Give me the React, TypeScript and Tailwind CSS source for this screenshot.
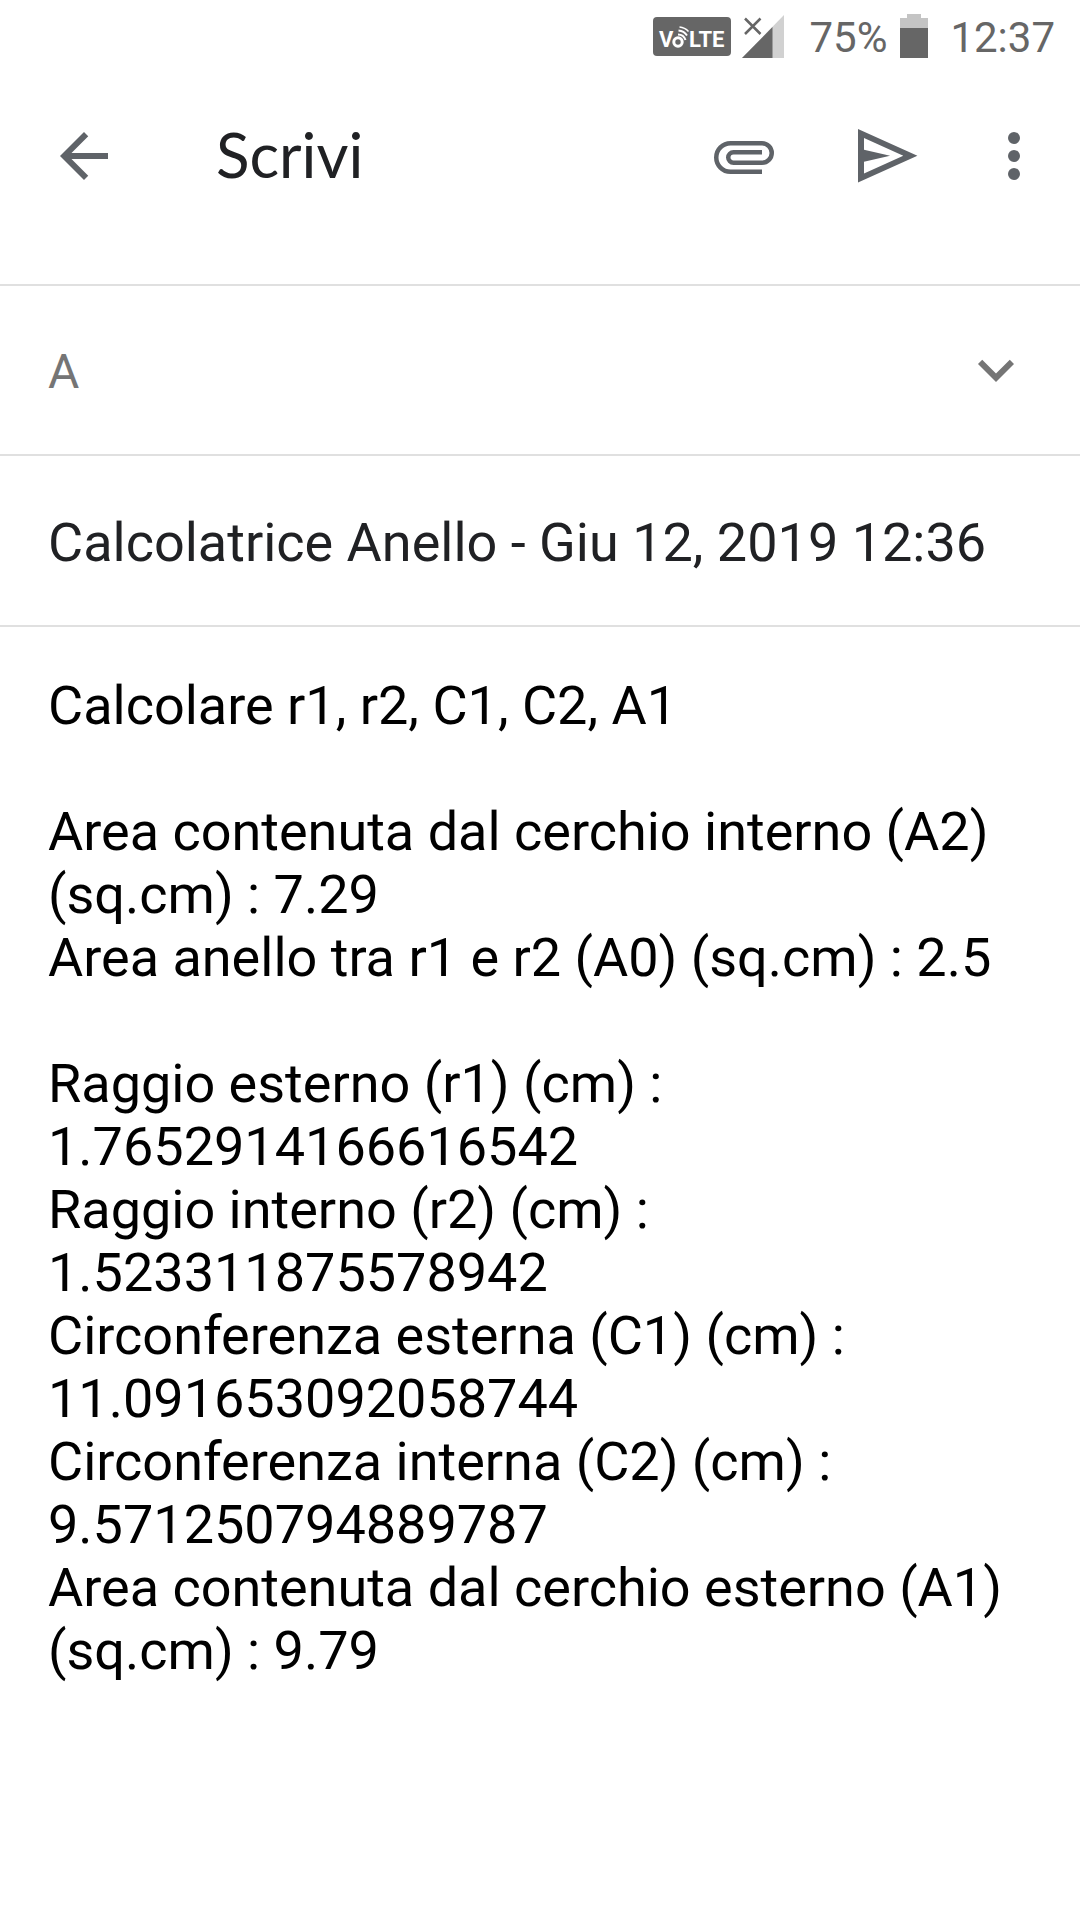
import { useState } from "react";

const DRAFT_SUBJECT = "Calcolatrice Anello - Giu 12, 2019 12:36";

const DRAFT_BODY = `Calcolare r1, r2, C1, C2, A1

Area contenuta dal cerchio interno (A2) (sq.cm) : 7.29
Area anello tra r1 e r2 (A0) (sq.cm) : 2.5

Raggio esterno (r1) (cm) : 1.7652914166616542
Raggio interno (r2) (cm) : 1.523311875578942
Circonferenza esterna (C1) (cm) : 11.091653092058744
Circonferenza interna (C2) (cm) : 9.571250794889787
Area contenuta dal cerchio esterno (A1) (sq.cm) : 9.79`;

function VolteBadge() {
  return (
    <svg viewBox="0 0 78 39" className="w-[78px] h-[39px]" aria-label="VoLTE">
      <rect width="78" height="39" rx="4" fill="#666666" />
      <g fill="#ffffff" className="font-['Roboto',sans-serif] font-bold text-[22px]">
        <text x="6" y="30">V</text>
        <text x="36" y="30">LTE</text>
      </g>
      <g fill="none" stroke="#ffffff">
        <circle cx="25" cy="25" r="4.2" strokeWidth="3" />
        <path d="M25 17.5a8 8 0 0 1 7.5 5.5" strokeWidth="2" />
        <path d="M25.5 13.5a11.5 11.5 0 0 1 8.5 5" strokeWidth="2" />
        <path d="M26.5 10a14 14 0 0 1 9 4.5" strokeWidth="1.5" />
      </g>
    </svg>
  );
}

function SignalIcon() {
  return (
    <svg viewBox="0 0 42 43" className="w-[42px] h-[43px]" fill="none">
      <path d="M42 0v43H0z" fill="#d1d1d1" />
      <path d="M30.5 12v31H0z" fill="#666666" />
      <path d="M3 3.500l15.500 15.500M18.500 3.500L3 19" stroke="#666666" strokeWidth="2.500" />
    </svg>
  );
}

function BatteryIcon() {
  return (
    <svg viewBox="0 0 28 44" className="w-7 h-11">
      <path d="M7 0h14v4h7v11H0V4h7z" fill="#c4c4c4" />
      <path d="M0 14h28v30H0z" fill="#666666" />
    </svg>
  );
}

function StatusBar() {
  return (
    <div className="h-[72px] flex items-center justify-end pr-[25px] text-[42px] leading-[49px] text-[#666666]">
      <VolteBadge />
      <div className="ml-[11px]">
        <SignalIcon />
      </div>
      <span className="ml-[25px] pt-[3px]">75%</span>
      <div className="ml-[13px]">
        <BatteryIcon />
      </div>
      <span className="ml-[22px] pt-[3px]">12:37</span>
    </div>
  );
}

function Header() {
  return (
    <header className="h-[168px] flex items-center pl-12 pr-[30px] text-[#5f6368]">
      <button aria-label="Indietro">
        <svg viewBox="0 0 24 24" className="size-[72px]" fill="currentColor">
          <path d="M20 11H7.83l5.590-5.590L12 4l-8 8 8 8 1.410-1.410L7.830 13H20v-2z" />
        </svg>
      </button>
      <h1 className="ml-24 pb-1 flex-1 font-['Lato',sans-serif] text-[62px] leading-[72px] text-[#202124]">
        Scrivi
      </h1>
      <div className="flex items-center gap-[69px]">
        <button aria-label="Allega file">
          <svg viewBox="0 0 24 24" className="size-[72px]" fill="none" stroke="currentColor" strokeWidth="1.5">
            <path d="M18 17.25H7.5a4.75 4.75 0 0 1 0-9.5H18a3.25 3.25 0 0 1 0 6.5H8.5a1.75 1.75 0 0 1 0-3.5H18" />
          </svg>
        </button>
        <button aria-label="Invia">
          <svg viewBox="0 0 24 24" className="size-[72px]" fill="currentColor">
            <path fillRule="evenodd" d="M3 3l19.8 8.9L3 20.8zM5 6v11.8l13.1-5.9z" />
            <path d="M5 9.9l8.7 2L5 13.9z" />
          </svg>
        </button>
      </div>
      <button aria-label="Altre opzioni" className="ml-[57px]">
        <svg viewBox="0 0 24 24" className="size-[72px]" fill="currentColor">
          <circle cx="12" cy="6" r="2" />
          <circle cx="12" cy="12" r="2" />
          <circle cx="12" cy="18" r="2" />
        </svg>
      </button>
    </header>
  );
}

export default function App() {
  const [to, setTo] = useState("");
  const [subject, setSubject] = useState(DRAFT_SUBJECT);
  const [body, setBody] = useState(DRAFT_BODY);

  return (
    <div className="min-h-screen flex flex-col bg-white font-['Roboto',sans-serif]">
      <StatusBar />
      <Header />

      <form className="mt-11 flex-1 flex flex-col">
        <div className="h-[170px] flex items-center px-12 border-t-2 border-[#e0e0e0] text-[#757575]">
          <label htmlFor="to" className="pt-1 text-[48px] leading-[56px]">
            A
          </label>
          <input
            id="to"
            value={to}
            onChange={(e) => setTo(e.target.value)}
            className="ml-6 pt-1 flex-1 min-w-0 text-[48px] leading-[56px] outline-none"
          />
          <button type="button" aria-label="Aggiungi Cc/Ccn">
            <svg viewBox="0 0 24 24" className="size-[72px]" fill="currentColor">
              <path d="M7.41 8.59L12 13.17l4.59-4.58L18 10l-6 6-6-6z" />
            </svg>
          </button>
        </div>

        <div className="h-[173px] flex items-center px-12 pt-1 border-y-2 border-[#e0e0e0]">
          <input
            aria-label="Oggetto"
            value={subject}
            onChange={(e) => setSubject(e.target.value)}
            className="w-full text-[54px] leading-[63px] text-[#202124] outline-none"
          />
        </div>

        <textarea
          aria-label="Scrivi email"
          value={body}
          onChange={(e) => setBody(e.target.value)}
          className="flex-1 w-full resize-none px-12 pt-[47px] text-[54px] leading-[63px] text-black outline-none"
        />
      </form>
    </div>
  );
}
